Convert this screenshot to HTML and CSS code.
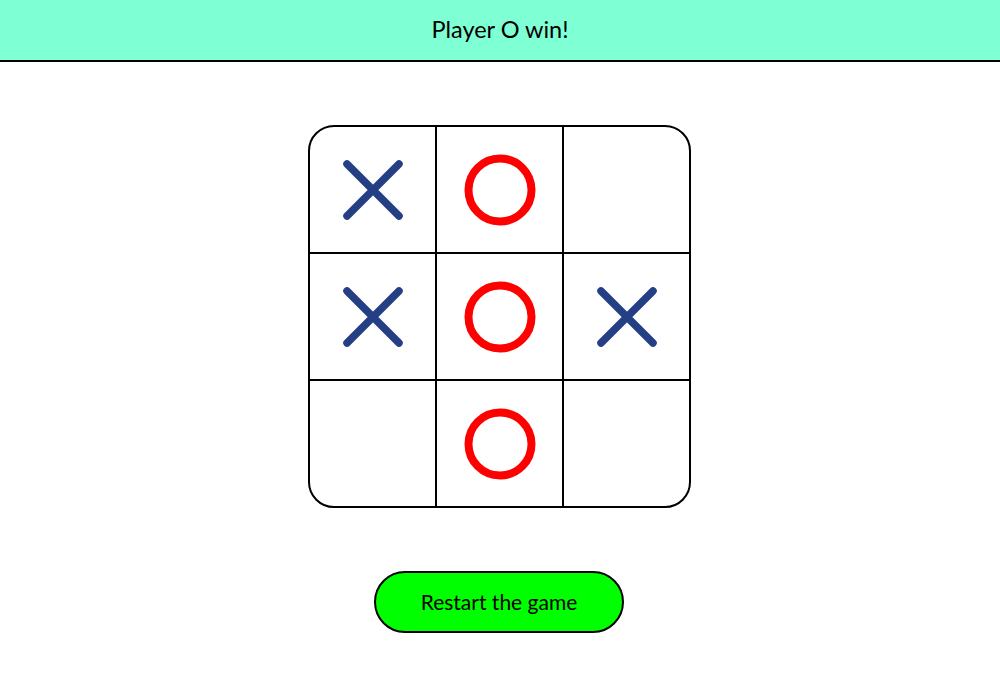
FILE: index.html
```html
<!DOCTYPE html>
<html lang="en">
<head>
<meta charset="utf-8">
<title>Tic Tac Toe</title>
<link rel="stylesheet" href="styles.css">
</head>
<body>
<header class="status">Player O win!</header>
<main class="game">
  <div class="board">
    <div class="cell"><svg class="mark" viewBox="0 0 60 60"><path class="x" d="M4 4 L56 56 M56 4 L4 56"/></svg></div>
    <div class="cell"><svg class="mark" viewBox="0 0 72 72"><circle class="o" cx="36" cy="36" r="31.5"/></svg></div>
    <div class="cell"></div>
    <div class="cell"><svg class="mark" viewBox="0 0 60 60"><path class="x" d="M4 4 L56 56 M56 4 L4 56"/></svg></div>
    <div class="cell"><svg class="mark" viewBox="0 0 72 72"><circle class="o" cx="36" cy="36" r="31.5"/></svg></div>
    <div class="cell"><svg class="mark" viewBox="0 0 60 60"><path class="x" d="M4 4 L56 56 M56 4 L4 56"/></svg></div>
    <div class="cell"></div>
    <div class="cell"><svg class="mark" viewBox="0 0 72 72"><circle class="o" cx="36" cy="36" r="31.5"/></svg></div>
    <div class="cell"></div>
  </div>
  <button class="restart">Restart the game</button>
</main>
</body>
</html>
```

FILE: styles.css
```css
* { box-sizing: border-box; }
html, body { margin: 0; padding: 0; background: #fff; }
body { font-family: "Lato", "Open Sans", sans-serif; color: #000; }

.status {
  height: 62px;
  background: #7fffd4;
  border-bottom: 2px solid #000;
  display: flex;
  align-items: center;
  justify-content: center;
  font-size: 23.5px;
  padding-bottom: 2px;
}

.game {
  display: flex;
  flex-direction: column;
  align-items: center;
  padding-top: 63px;
  gap: 63px;
}

.board {
  width: 383px;
  height: 383px;
  margin-right: 1px;
  border: 2px solid #000;
  border-radius: 26px;
  display: grid;
  grid-template-columns: 127px 127px 125px;
  grid-template-rows: 127px 127px 125px;
  overflow: hidden;
}

.cell {
  display: flex;
  align-items: center;
  justify-content: center;
  border-right: 2px solid #000;
  border-bottom: 2px solid #000;
}
.cell:nth-child(3n) { border-right: none; }
.cell:nth-child(n+7) { border-bottom: none; }

.mark { display: block; }
.cell svg[viewBox="0 0 60 60"] { width: 60px; height: 60px; }
.cell svg[viewBox="0 0 72 72"] { width: 72px; height: 72px; }

.x {
  stroke: #253f85;
  stroke-width: 7.5;
  stroke-linecap: round;
  fill: none;
}
.o {
  stroke: #ff0000;
  stroke-width: 8;
  fill: none;
}

.restart {
  width: 250px;
  height: 62px;
  margin-right: 2px;
  background: #00ff00;
  border: 2px solid #000;
  border-radius: 31px;
  font-family: inherit;
  font-size: 21px;
  color: #000;
  padding: 0 0 2px;
  cursor: pointer;
}
```
